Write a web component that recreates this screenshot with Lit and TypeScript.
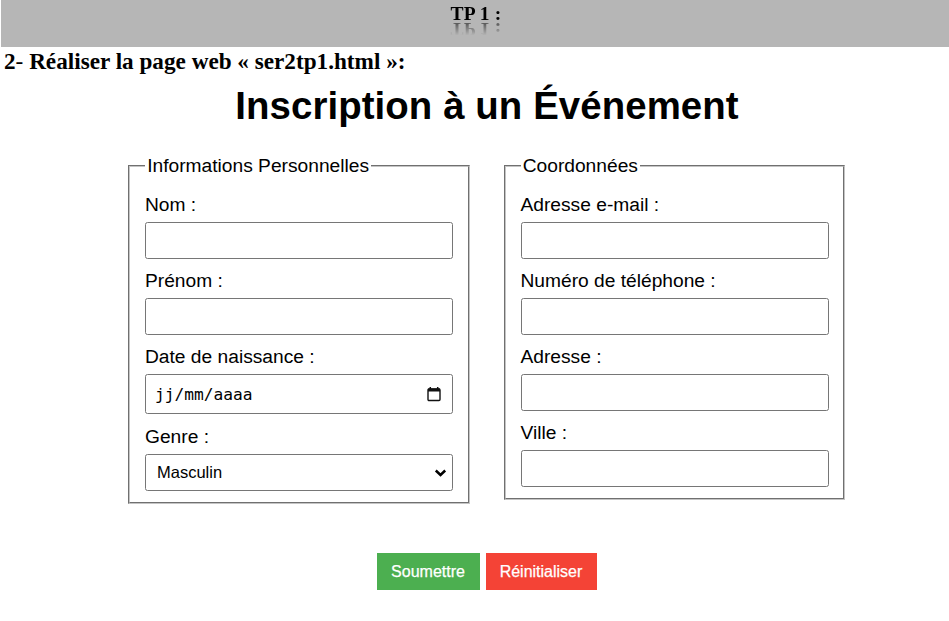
import { LitElement, html, css } from "lit";
import { customElement } from "lit/decorators.js";

const contactFields = ["Adresse e-mail :", "Numéro de téléphone :", "Adresse :", "Ville :"];

@customElement("app-root")
export class AppRoot extends LitElement {
  static styles = css`
    :host { display: block; height: 621px; overflow: hidden; background: #fff; color: #000; }
    * { box-sizing: border-box; }
    .banner {
      height: 47px; margin-left: 1px; background: #b6b6b6; text-align: center;
      font: bold 19.5px/28px "Liberation Serif", serif;
    }
    .banner-title {
      display: inline-block; height: 22px; line-height: 28px; letter-spacing: 0.2px; padding-left: 2px;
      -webkit-box-reflect: below -1px linear-gradient(transparent 35%, rgba(0, 0, 0, 0.6));
    }
    .task {
      margin: 0; padding-left: 4px; height: 33px; white-space: nowrap;
      font: bold 23.2px/29px "Liberation Serif", serif;
    }
    .dash { font-weight: normal; }
    .form { font: 19.2px/22px "Liberation Sans", Arial, sans-serif; }
    h1 {
      margin: 0; padding: 1px 0 0 25px; text-align: center; font-size: 38.4px; line-height: 50px;
      height: 74px; letter-spacing: 0.08px;
    }
    .columns { display: flex; align-items: flex-start; gap: 34px; margin-left: 128px; }
    fieldset { margin: 0; width: 341.5px; min-width: 0; border: 2px groove #c4c4c4; padding: 17px 15px 11px; }
    legend { padding: 1px 2.2px 0; line-height: 22px; height: 23px; }
    .field { display: block; margin-bottom: 11px; }
    .field:last-child { margin-bottom: 0; }
    .caption { display: block; height: 28px; line-height: 22px; }
    .box {
      display: flex; align-items: center; justify-content: space-between;
      width: 308px; height: 37px; padding: 0 10px; border: 1px solid #767676; border-radius: 2.5px;
      background: #fff; font: 16px "Liberation Sans", Arial, sans-serif; outline: none;
    }
    .date { height: 40px; margin-bottom: 12px; padding: 0 10px 0 9px; font: 16.2px "DejaVu Sans Mono", monospace; }
    .select { height: 37px; padding: 0 5px 0 11px; font-size: 16.5px; }
    .actions { display: flex; justify-content: center; gap: 6px; margin: 49px 0 0 24px; }
    button { border: 0; height: 37px; padding: 0; color: #fff; font: 16px "Liberation Sans", Arial, sans-serif; -webkit-text-stroke: 0.25px #fff; }
    .submit { width: 103px; background: #4caf50; }
    .reset { width: 111px; background: #f44336; }
  `;

  private textField(caption: string) {
    return html`<label class="field"><span class="caption">${caption}</span><input class="box" type="text" /></label>`;
  }

  render() {
    return html`
      <header class="banner"><span class="banner-title">TP 1 :</span></header>
      <p class="task">2<span class="dash">-</span> Réaliser la page web « ser2tp1.html »:</p>
      <form class="form">
        <h1>Inscription à un Événement</h1>
        <div class="columns">
          <fieldset>
            <legend>Informations Personnelles</legend>
            ${this.textField("Nom :")} ${this.textField("Prénom :")}
            <div class="field">
              <span class="caption">Date de naissance :</span>
              <div class="box date">
                <span>jj/mm/aaaa</span>
                <svg width="16" height="16" viewBox="0 0 16 16" fill="none" stroke="#111">
                  <rect x="2" y="3" width="12" height="11.5" rx="1" stroke-width="1.4" />
                  <path d="M2 4h12" stroke-width="3" />
                  <path d="M4.3 1v3M11.7 1v3" stroke-width="1.5" />
                </svg>
              </div>
            </div>
            <div class="field">
              <span class="caption">Genre :</span>
              <div class="box select">
                <span>Masculin</span>
                <svg width="13" height="10" viewBox="0 0 13 10" fill="none" stroke="#000" stroke-width="2.5">
                  <path d="M1.8 2.5 6.5 7l4.7-4.5" />
                </svg>
              </div>
            </div>
          </fieldset>
          <fieldset>
            <legend>Coordonnées</legend>
            ${contactFields.map((caption) => this.textField(caption))}
          </fieldset>
        </div>
        <div class="actions">
          <button class="submit" type="button">Soumettre</button>
          <button class="reset" type="reset">Réinitialiser</button>
        </div>
      </form>
    `;
  }
}
